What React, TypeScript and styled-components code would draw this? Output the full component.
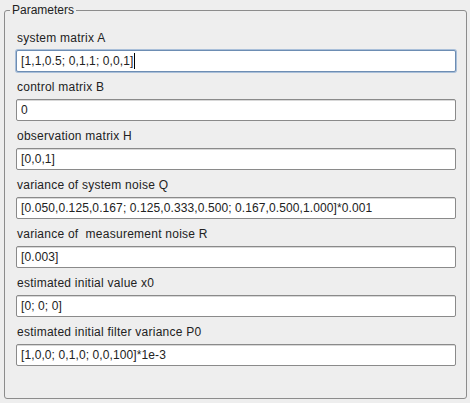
import styled, { createGlobalStyle } from "styled-components";

const GlobalStyle = createGlobalStyle`
  html, body {
    margin: 0;
    padding: 0;
    background: #eeeeee;
  }
  body {
    font-family: "Liberation Sans", Arial, sans-serif;
    font-size: 12px;
    color: #222222;
  }
`;

const Frame = styled.fieldset`
  box-sizing: border-box;
  height: 396px;
  margin: 3px 3px 0 4px;
  padding: 14px 10px 0 11px;
  border: 1px solid #8c8c8c;
  border-radius: 3px;
  min-inline-size: 0;
`;

const Title = styled.legend`
  margin-left: -6px;
  padding: 0 2px;
  font-size: 12px;
  line-height: 14px;
  color: #222222;
`;

const Fields = styled.div`
  display: flex;
  flex-direction: column;
  gap: 8px;
`;

const Row = styled.div`
  display: flex;
  flex-direction: column;
  gap: 5px;
`;

const Label = styled.label`
  line-height: 14px;
  padding-left: 1px;
  letter-spacing: 0.25px;
  white-space: pre;
`;

const TextBox = styled.div<{ $focused?: boolean }>`
  box-sizing: border-box;
  height: 22px;
  display: flex;
  align-items: center;
  padding: 0 4px;
  background: #ffffff;
  border: 1px solid ${(p) => (p.$focused ? "#6d8db3" : "#8a8a8a")};
  border-radius: 2px;
  box-shadow: ${(p) =>
    p.$focused ? "0 0 0 1px #a9bfd9" : "inset 0 1px 0 #d8d8d8"};
  white-space: nowrap;
  overflow: hidden;
  letter-spacing: 0.1px;
`;

const Caret = styled.span`
  display: inline-block;
  width: 1px;
  height: 16px;
  margin-left: 1px;
  background: #000000;
`;

const params = [
  { label: "system matrix A", value: "[1,1,0.5; 0,1,1; 0,0,1]", focused: true },
  { label: "control matrix B", value: "0" },
  { label: "observation matrix H", value: "[0,0,1]" },
  {
    label: "variance of system noise Q",
    value: "[0.050,0.125,0.167; 0.125,0.333,0.500; 0.167,0.500,1.000]*0.001",
  },
  { label: "variance of  measurement noise R", value: "[0.003]" },
  { label: "estimated initial value x0", value: "[0; 0; 0]" },
  { label: "estimated initial filter variance P0", value: "[1,0,0; 0,1,0; 0,0,100]*1e-3" },
];

const App = () => {
  return (
    <>
      <GlobalStyle />
      <Frame>
        <Title>Parameters</Title>
        <Fields>
          {params.map((p) => (
            <Row key={p.label}>
              <Label>{p.label}</Label>
              <TextBox $focused={p.focused}>
                {p.value}
                {p.focused && <Caret />}
              </TextBox>
            </Row>
          ))}
        </Fields>
      </Frame>
    </>
  );
};

export default App;
